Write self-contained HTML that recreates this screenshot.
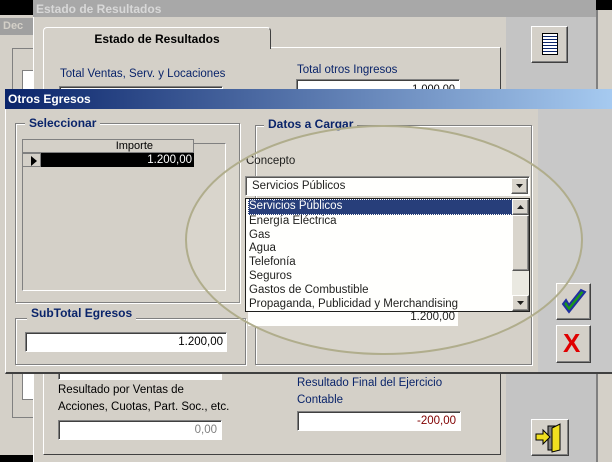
<!DOCTYPE html>
<html><head><meta charset="utf-8"><style>
*{margin:0;padding:0;box-sizing:border-box}
body{width:612px;height:462px;overflow:hidden;background:#000;font-family:"Liberation Sans",sans-serif;font-size:11px;position:relative}
.a{position:absolute}
.box{position:absolute;background:#fff;border-top:1px solid #808080;border-left:1px solid #808080;border-bottom:1px solid #fff;border-right:1px solid #fff;box-shadow:inset 1px 1px 0 #404040}
.grp{position:absolute;border:1px solid #808080;box-shadow:1px 1px 0 #fff, inset 1px 1px 0 #fff}
.lbl{position:absolute;background:#d4d0c8;color:#0a246a;font-weight:bold;font-size:12px;padding:0 4px}
.btn{position:absolute;background:#d4d0c8;border:1px solid;border-color:#fff #404040 #404040 #fff;box-shadow:inset -1px -1px 0 #808080}
.blue{color:#0a246a}
</style></head><body>
<div class="a" style="left:0;top:15px;width:40px;height:440px;background:#d4d0c8"></div>
<div class="a" style="left:0;top:18px;width:40px;height:17px;background:#a0a0a0;color:#d4d0c8;font-weight:bold;padding:2px 3px">Dec</div>
<div class="a" style="left:12px;top:48px;width:22px;height:370px;border:1px solid #808080;border-right:none"></div>
<div class="a" style="left:22px;top:70px;width:12px;height:330px;border:1px solid #808080;border-right:none;background:#fff"></div>
<div class="a" style="left:596px;top:10px;width:16px;height:452px;background:#d4d0c8;border-left:2px solid #808080"></div>
<div class="a" style="left:33px;top:0;width:563px;height:462px;background:#d4d0c8;border-left:1px solid #fff"></div>
<div class="a" style="left:33px;top:0;width:563px;height:17px;background:#a8a8a8;color:#d8d8d8;font-weight:bold;font-size:12px;padding:2px 3px">Estado de Resultados</div>
<div class="a" style="left:506px;top:17px;width:90px;height:445px;background:#c4c4c4"></div>
<div class="a" style="left:43px;top:47px;width:458px;height:408px;border:1px solid #fff;border-right-color:#404040;border-bottom-color:#404040"></div>
<div class="a" style="left:43px;top:27px;width:228px;height:22px;background:#d4d0c8;border:1px solid #fff;border-bottom:none;border-right-color:#404040;border-radius:4px 4px 0 0;font-weight:bold;font-size:12px;text-align:center;padding-top:4px">Estado de Resultados</div>
<div class="a blue" style="left:60px;top:68px;font-size:11.5px">Total Ventas, Serv. y Locaciones</div>
<div class="box" style="left:59px;top:86px;width:164px;height:10px"></div>
<div class="a blue" style="left:297px;top:64px;font-size:11.5px">Total otros Ingresos</div>
<div class="box" style="left:296px;top:79px;width:164px;height:12px;text-align:right;font-size:11px;padding-right:4px;line-height:18px;overflow:hidden">1.000,00</div>
<div class="btn" style="left:531px;top:26px;width:37px;height:37px"><div class="a" style="left:10px;top:6px;width:16px;height:22px;background:#fff;border:1px solid #000;background-image:repeating-linear-gradient(#fff 0 2px,#0a246a 2px 3px)"></div></div>
<div class="a" style="left:58px;top:382px;font-size:11.5px;line-height:17px">Resultado por Ventas de<br>Acciones, Cuotas, Part. Soc., etc.</div>
<div class="box" style="left:58px;top:420px;width:164px;height:20px;text-align:right;color:#808080;padding:3px 4px;font-size:11.5px">0,00</div>
<div class="a blue" style="left:297px;top:375px;font-size:11.5px;line-height:17px">Resultado Final del Ejercicio<br>Contable</div>
<div class="box" style="left:297px;top:411px;width:164px;height:20px;text-align:right;color:#800000;padding:3px 4px;font-size:11.5px">-200,00</div>
<div class="box" style="left:58px;top:368px;width:164px;height:12px"></div>
<div class="btn" style="left:531px;top:419px;width:38px;height:37px">
<svg width="36" height="35" style="position:absolute;left:0;top:0"><rect x="16" y="6" width="10" height="24" fill="#808080" stroke="#000"/><polygon points="20,8 28,4 28,30 20,32" fill="#f0e020" stroke="#000"/><polygon points="4,14 11,14 11,10 18,17 11,24 11,20 4,20" fill="#f0e020" stroke="#000"/></svg></div>
<div class="a" style="left:5px;top:89px;width:607px;height:285px;background:#d4d0c8;border-left:1px solid #fff;border-bottom:2px solid #404040"></div>
<div class="a" style="left:5px;top:89px;width:607px;height:20px;background:linear-gradient(90deg,#0a246a,#a6caf0);color:#fff;font-weight:bold;font-size:12px;padding:3px 3px">Otros Egresos</div>
<div class="a" style="left:538px;top:109px;width:74px;height:263px;background:#c8c8c8"></div>
<div class="grp" style="left:15px;top:123px;width:225px;height:180px"></div>
<div class="lbl" style="left:25px;top:116px">Seleccionar</div>
<div class="a" style="left:22px;top:143px;width:204px;height:148px;border:1px solid #808080;border-right-color:#fff;border-bottom-color:#fff"></div>
<div class="a" style="left:22px;top:139px;width:172px;height:14px;background:#d4d0c8;border:1px solid #808080;text-align:right;padding-right:40px;font-size:11px;line-height:12px">Importe</div>
<div class="a" style="left:22px;top:153px;width:19px;height:14px;background:#d4d0c8;border:1px solid #808080"><svg width="12" height="12" style="position:absolute;left:6px;top:1px"><polygon points="2,1 8,6 2,11" fill="#000"/></svg></div>
<div class="a" style="left:41px;top:153px;width:153px;height:14px;background:#000;color:#fff;text-align:right;padding-right:2px;font-size:11.5px;line-height:14px">1.200,00</div>
<div class="grp" style="left:15px;top:318px;width:231px;height:47px"></div>
<div class="lbl" style="left:27px;top:306px">SubTotal Egresos</div>
<div class="box" style="left:25px;top:332px;width:202px;height:20px;text-align:right;padding:3px 3px;font-size:11.5px">1.200,00</div>
<div class="grp" style="left:255px;top:125px;width:277px;height:240px"></div>
<div class="lbl" style="left:264px;top:117px">Datos a Cargar</div>
<div class="a" style="left:246px;top:155px;font-size:11.5px">Concepto</div>
<div class="box" style="left:245px;top:176px;width:285px;height:20px;padding:3px 6px;font-size:11.5px">Servicios Públicos</div>
<div class="btn" style="left:511px;top:178px;width:17px;height:16px"><svg width="15" height="14"><polygon points="4,5 11,5 7.5,9" fill="#000"/></svg></div>
<div class="a" style="left:245px;top:198px;width:285px;height:114px;background:#fff;border:1px solid #000;font-size:11.5px;line-height:13.8px;padding-left:2px">
<div style="background:#0a246a;color:#fff;width:265px;border:1px dotted #fff">Servicios Públicos</div>
<div style="padding-left:1px">Energía Eléctrica<br>Gas<br>Agua<br>Telefonía<br>Seguros<br>Gastos de Combustible<br>Propaganda, Publicidad y Merchandising</div>
</div>
<div class="a" style="left:512px;top:199px;width:17px;height:112px;background:#e8e6e0"></div>
<div class="btn" style="left:512px;top:199px;width:17px;height:16px"><svg width="15" height="14"><polygon points="4,9 11,9 7.5,5" fill="#000"/></svg></div>
<div class="btn" style="left:512px;top:215px;width:17px;height:56px"></div>
<div class="btn" style="left:512px;top:295px;width:17px;height:16px"><svg width="15" height="14"><polygon points="4,5 11,5 7.5,9" fill="#000"/></svg></div>
<div class="a" style="left:248px;top:312px;width:210px;height:14px;background:#fff;text-align:right;font-size:11.5px;line-height:10px;overflow:hidden;padding-right:3px">1.200,00</div>
<div class="btn" style="left:556px;top:283px;width:35px;height:37px"><svg width="33" height="35"><path d="M6 20 L12 28 L28 8 L24 6 L12 21 L9 16 Z" fill="#1a9a1a" stroke="#2030a0" stroke-width="2"/></svg></div>
<div class="btn" style="left:556px;top:325px;width:35px;height:38px"><div class="a" style="left:6px;top:2px;color:#e00000;font-weight:bold;font-size:26px;font-family:'Liberation Sans'">X</div></div>
<svg class="a" style="left:0;top:0" width="612" height="462"><ellipse cx="384" cy="240" rx="198" ry="114" fill="rgba(255,255,240,0.12)" stroke="#b0ad8c" stroke-width="2"/></svg>
</body></html>
